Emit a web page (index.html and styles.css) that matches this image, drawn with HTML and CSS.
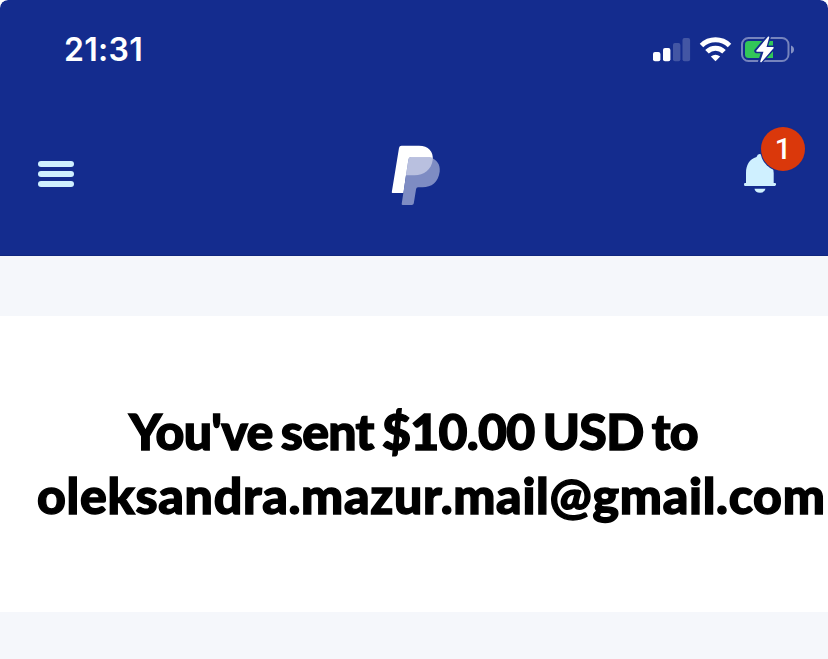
FILE: index.html
```html
<!DOCTYPE html>
<html lang="en">
<head>
<meta charset="utf-8">
<title>Payment sent</title>
<link rel="stylesheet" href="styles.css">
</head>
<body>
<header class="top">
  <div class="status">
    <span class="time">21:31</span>
    <svg class="indicators" width="144" height="30" viewBox="651 35 144 30">
      <g fill="#fff">
        <rect x="653" y="52" width="7.4" height="9.3" rx="2"/>
        <rect x="663" y="48" width="7.4" height="13.3" rx="2"/>
        <g opacity=".2"><rect x="673" y="43" width="7.4" height="18.3" rx="2"/><rect x="682.5" y="38" width="7.6" height="23.3" rx="2"/></g>
      </g>
      <g fill="none" stroke="#fff" stroke-width="5">
        <path d="M701.5 45.5a20 20 0 0 1 28 0"/>
        <path d="M707 51.8a12 12 0 0 1 17 0"/>
      </g>
      <path fill="#fff" d="M710.8 56.5q4.7-3.6 9.4 0L715.5 61.300z"/>
      <rect x="742" y="38" width="46.500" height="23" rx="6.500" fill="none" stroke="#fff" stroke-opacity=".42" stroke-width="2"/>
      <path d="M791 45.500q3 1 3 4t-3 4z" fill="#fff" opacity=".48"/>
      <path d="M748.500 41H773v17h-24.500q-3.500 0-3.500-3.500v-10q0-3.500 3.500-3.500z" fill="#32c759"/>
      <path d="M768.700 36.600 756.500 51h7.300L760.300 61.700 773.200 47.700H765.300z" fill="#142c8e" stroke="#142c8e" stroke-width="4.500" stroke-linejoin="round"/>
      <path d="M768.500 37.200 757 51h7.500L761 61.500 773 47.700H765.500z" fill="#fff" stroke="#fff" stroke-width="1.500" stroke-linejoin="round"/>
    </svg>
  </div>
  <nav class="nav">
    <svg width="36" height="26" viewBox="0 0 36 26" fill="#cff0ff"><rect width="36" height="6" rx="3"/><rect y="10" width="36" height="6" rx="3"/><rect y="20" width="36" height="6" rx="3"/></svg>
    <svg class="logo" width="50" height="60" viewBox="391 145 50 60">
      <path d="M401.500 145.700H419c9.500 0 14.500 6 13.700 13.500-1.300 11-9 16-18.200 16H406l-2.500 17.800H392.600q-1 0-.8-1l7.200-44q.4-2.300 2.500-2.300z" fill="#fff"/>
      <path d="M410.500 157.500H430c7 1.500 10.500 7.500 9.700 14-1.300 11-8.200 15.700-17.200 15.700H418q-1.600 0-1.900 1.800l-2.300 14.200q-.3 1.800-2 1.800H402.700q-1.200 0-1-1.200l6.700-44.300q.3-2.200 2.100-2.200z" fill="#7e8cc3"/>
      <path d="M410.500 157.500H432.800q.1 1 0 2c-1.400 10.500-8.800 15.700-18.300 15.700H406l2.400-15.500q.3-2.200 2.100-2.200z" fill="#b9c0df"/>
    </svg>
    <div class="alerts">
      <svg width="34" height="40" viewBox="743 153 34 40" fill="#cff0ff"><path d="M746 183V173c0-8 3.500-14 10.500-16q1-3 3-3 3.500 0 4 3.500 10 4 10.200 15.500V183h1.200q1.200 0 1.200 1.300T774.900 185.900H745.300q-1.300 0-1.300-1.500t1.200-1.400z"/><path d="M754.500 188.700h11q-.8 4-5.500 4t-5.500-4z"/></svg>
      <span class="badge">1</span>
    </div>
  </nav>
</header>
<main class="message">
  <h1><span class="sent">You've sent $10.00 USD to</span><span class="email">oleksandra.mazur.mail@gmail.com</span></h1>
</main>
</body>
</html>
```
FILE: styles.css
```css
* { box-sizing: border-box; }
html { background: #fff; }
body { margin: 0; height: 659px; overflow: hidden; background: #f5f7fb; border-radius: 8px 8px 0 0; }
svg { display: block; flex: none; }
.top { height: 256px; background: #142c8e; border-radius: 8px 8px 0 0; box-shadow: inset 0 -1px #10267f; }
.status { height: 100px; padding: 0 33px 0 64px; display: flex; align-items: center; justify-content: space-between; }
.time { color: #fff; font: 560 32px/40px Inter, sans-serif; letter-spacing: .3px; }
.nav { height: 148px; padding: 0 51px 0 38px; display: flex; align-items: center; }
.logo { margin: 2px auto 0 317px; }
.alerts { position: relative; margin-top: -2px; }
.badge { position: absolute; left: 18px; top: -26px; width: 44px; height: 44px; border-radius: 50%; background: #da380b; color: #fff; font: 500 29px/44px Roboto, sans-serif; text-align: center; box-shadow: 0 0 0 1px #142c8e; }
.message { height: 296px; margin-top: 60px; padding-top: 83px; background: #fff; }
h1 { margin: 0; font: 900 50px/64px Lato, sans-serif; color: #000; white-space: nowrap; -webkit-text-stroke: 1.4px #000; }
h1 span { display: block; width: max-content; }
.sent { margin-left: 129px; letter-spacing: -.7px; word-spacing: -3px; }
.email { margin-left: 37px; letter-spacing: .7px; }
```
